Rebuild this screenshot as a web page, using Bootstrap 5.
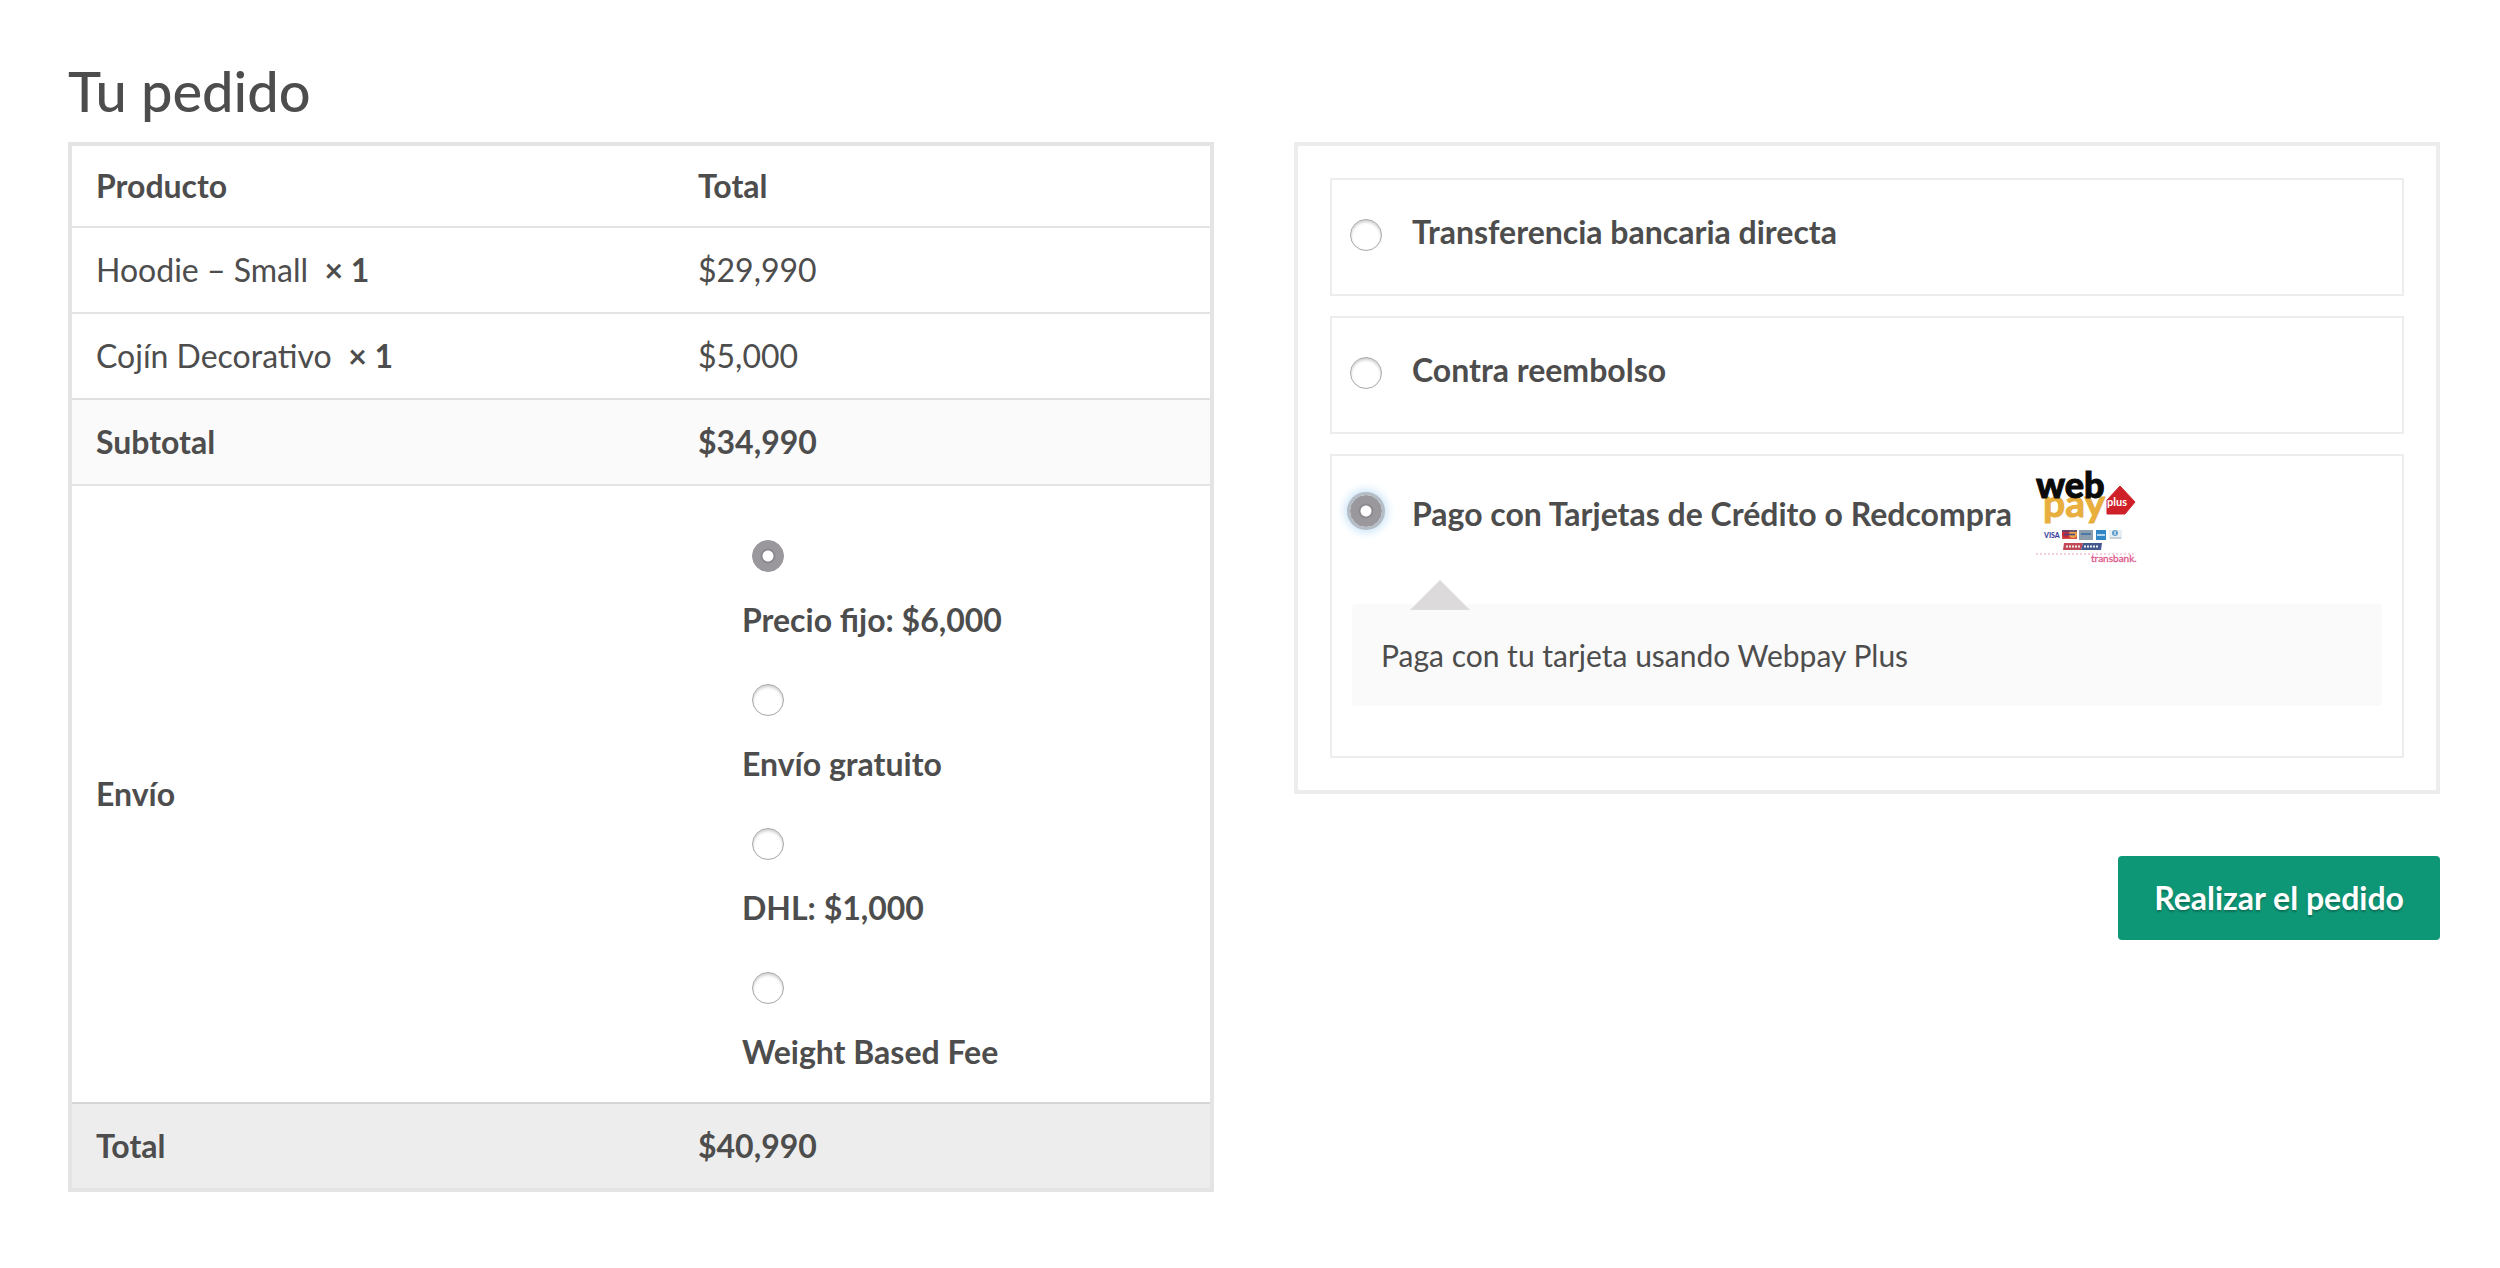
<!DOCTYPE html>
<html lang="es">
<head>
<meta charset="utf-8">
<meta name="viewport" content="width=device-width, initial-scale=1">
<title>Tu pedido</title>
<link href="https://cdn.jsdelivr.net/npm/bootstrap@5.3.0/dist/css/bootstrap.min.css" rel="stylesheet">
<style>
  body { font-family: Lato, "Open Sans", sans-serif; font-size: 32px; line-height: 48px; color: #4d4d4d; }
  .checkout { padding: 51px 60px 60px 68px; }
  .checkout-title { font-size: 56px; line-height: 80px; font-weight: 500; margin-bottom: 11px; }
  .checkout-cols { --bs-gutter-x: 80px; --bs-gutter-y: 40px; }

  .order-box { border: 4px solid #e4e4e4; }
  .order-table { --bs-table-color: #4d4d4d; color: #4d4d4d; table-layout: fixed; }
  .order-table > :not(caption) > * > * { padding: 18px 24px; border-bottom: 0; border-top: 2px solid #e4e4e4; vertical-align: middle; }
  .order-table > thead > tr > th { padding-block: 16px; border-top: 0; }
  .order-table .name-col { width: 52.9%; }
  .order-table > tfoot > .subtotal-row > * { background: #fafafa; border-top-color: #e0e0e0; }
  .order-table > tfoot > .total-row > * { background: #ededed; border-top-color: #d5d5d5; }
  .ship-list { padding: 36px 0 8px 44px; gap: 40px; }
  .ship-item { gap: 24px; }
  .ship-item .round-radio { margin-left: 10px; }

  .round-radio { appearance: none; flex: none; width: 32px; height: 32px; margin: 0; border: 1px solid #a8a8a8; border-radius: 50%; background: #fff; box-shadow: inset 0 2px 3px rgba(0,0,0,.2); }
  .round-radio:checked { border-color: #9a989d; background: radial-gradient(circle, #fff 5px, #848287 6px, #9a989d 8px); box-shadow: none; }
  .pay-item .round-radio:checked { box-shadow: 0 0 0 3px #b4bcc5, 0 0 10px 5px #c5e2f8; }

  .pay-box { border: 4px solid #ededed; padding: 32px; gap: 20px; }
  .pay-item { border: 2px solid #ededed; padding: 16px 18px 26px; }
  .pay-item.is-open { padding-bottom: 50px; }
  .pay-row { gap: 30px; }
  .pay-row .round-radio { margin-top: 23px; }
  .pay-label { padding-block: 12px; }
  .is-open .pay-label { padding-block: 0; }
  .pay-logo { width: 100px; height: 92px; margin-left: 16px; vertical-align: middle; overflow: visible; }
  .pay-note { margin: 40px 2px 0; padding: 27px 29px; background: #fafafa; border-radius: 4px; font-size: 30px; }
  .pay-note::before { content: ""; position: absolute; left: 58px; top: -24px; border: 30px solid transparent; border-top: 0; border-bottom-color: #dddadb; }
  .btn-order { --bs-btn-bg: #0e9776; --bs-btn-color: #fff; --bs-btn-hover-bg: #0b8064; --bs-btn-hover-color: #fff; --bs-btn-border-width: 0; --bs-btn-border-radius: 4px; --bs-btn-padding-x: 36px; --bs-btn-padding-y: 18px; --bs-btn-font-size: 32px; --bs-btn-font-weight: 700; --bs-btn-line-height: 48px; margin-top: 62px; text-shadow: 0 2px 2px rgba(0,0,0,.25); }
</style>
</head>
<body>
<form class="checkout container-fluid">
  <h1 class="checkout-title">Tu pedido</h1>
  <div class="row checkout-cols">
    <div class="col-12 col-lg-6">
      <div class="order-box">
        <table class="table order-table mb-0">
          <thead>
            <tr><th class="name-col" scope="col">Producto</th><th scope="col">Total</th></tr>
          </thead>
          <tbody>
            <tr><td>Hoodie – Small&nbsp; <strong>× 1</strong></td><td>$29,990</td></tr>
            <tr><td>Cojín Decorativo&nbsp; <strong>× 1</strong></td><td>$5,000</td></tr>
          </tbody>
          <tfoot>
            <tr class="subtotal-row"><th scope="row">Subtotal</th><td class="fw-bold">$34,990</td></tr>
            <tr>
              <th scope="row">Envío</th>
              <td>
                <ul class="ship-list list-unstyled d-flex flex-column mb-0 fw-bold">
                  <li class="ship-item d-flex flex-column align-items-start"><input class="round-radio" type="radio" name="envio" id="envio-fijo" checked><label for="envio-fijo">Precio fijo: $6,000</label></li>
                  <li class="ship-item d-flex flex-column align-items-start"><input class="round-radio" type="radio" name="envio" id="envio-gratis"><label for="envio-gratis">Envío gratuito</label></li>
                  <li class="ship-item d-flex flex-column align-items-start"><input class="round-radio" type="radio" name="envio" id="envio-dhl"><label for="envio-dhl">DHL: $1,000</label></li>
                  <li class="ship-item d-flex flex-column align-items-start"><input class="round-radio" type="radio" name="envio" id="envio-peso"><label for="envio-peso">Weight Based Fee</label></li>
                </ul>
              </td>
            </tr>
            <tr class="total-row"><th scope="row">Total</th><td class="fw-bold">$40,990</td></tr>
          </tfoot>
        </table>
      </div>
    </div>
    <div class="col-12 col-lg-6">
      <ul class="pay-box list-unstyled d-flex flex-column mb-0">
        <li class="pay-item">
          <div class="pay-row d-flex align-items-start"><input class="round-radio" type="radio" name="pago" id="pago-banco"><label class="pay-label fw-bold" for="pago-banco">Transferencia bancaria directa</label></div>
        </li>
        <li class="pay-item">
          <div class="pay-row d-flex align-items-start"><input class="round-radio" type="radio" name="pago" id="pago-contra"><label class="pay-label fw-bold" for="pago-contra">Contra reembolso</label></div>
        </li>
        <li class="pay-item is-open">
          <div class="pay-row d-flex align-items-start">
            <input class="round-radio" type="radio" name="pago" id="pago-webpay" checked>
            <label class="pay-label fw-bold" for="pago-webpay">Pago con Tarjetas de Crédito o Redcompra
              <svg class="pay-logo" viewBox="0 0 100 92" role="img" aria-label="Webpay Plus">
                <g font-family="Lato, sans-serif">
                  <text x="7" y="45" font-size="39" font-weight="700" fill="#e8ae3e" stroke="#e8ae3e">pay</text>
                  <text x="0" y="26" font-size="36" font-weight="900" fill="#0a0a0a" stroke="#0a0a0a">web</text>
                  <path d="M84 14 L99 30 L89 42 H71 V28 Z" fill="#cf2029" stroke="#cf2029" stroke-linejoin="round"/>
                  <text x="71" y="34" font-size="11" font-weight="700" fill="#fff">plus</text>
                  <text x="8" y="66" font-size="7" font-weight="900" fill="#3a3f9e">VISA</text>
                  <text x="55" y="90" font-size="10" font-weight="400" fill="#e0558a" stroke="#e0558a" stroke-width=".3">transbank.</text>
                </g>
                <rect x="26" y="58" width="15" height="9" fill="#d5503f"/>
                <circle cx="30" cy="62" r="4" fill="#c22a3c"/><circle cx="37" cy="62" r="4" fill="#e9a24a"/>
                <path d="M26 59h15M28 62.500h11" stroke="#4a467f" stroke-width="1.500"/>
                <rect x="43" y="58" width="14" height="10" fill="#8c9dad"/><path d="M45 62h10" stroke="#4c79a5" stroke-width="2"/>
                <rect x="60" y="58" width="10" height="10" fill="#3187c6"/><path d="M61 63h8" stroke="#b5d6ee" stroke-width="2"/>
                <rect x="73" y="58" width="13" height="9" fill="#e6eef4"/><circle cx="79" cy="61" r="3" fill="#5f9dc8"/><path d="M79 59v4" stroke="#fff"/><path d="M74 66h11" stroke="#a5b4c0"/>
                <path d="M28 71h19l-2 7H27z" fill="#c24a57"/><path d="M47 71h19l-1 7H45z" fill="#42588f"/>
                <path d="M30 74.500h14M48 74.500h14" stroke="#eee" stroke-width="2" stroke-dasharray="2 1"/>
                <path d="M0 82h100" stroke="#f6cfdf" stroke-width="2" stroke-dasharray="2 2"/>
              </svg>
            </label>
          </div>
          <div class="pay-note position-relative">Paga con tu tarjeta usando Webpay Plus</div>
        </li>
      </ul>
      <div class="d-flex justify-content-end"><button class="btn btn-order" type="submit">Realizar el pedido</button></div>
    </div>
  </div>
</form>
<script src="https://cdn.jsdelivr.net/npm/bootstrap@5.3.0/dist/js/bootstrap.bundle.min.js"></script>
</body>
</html>
